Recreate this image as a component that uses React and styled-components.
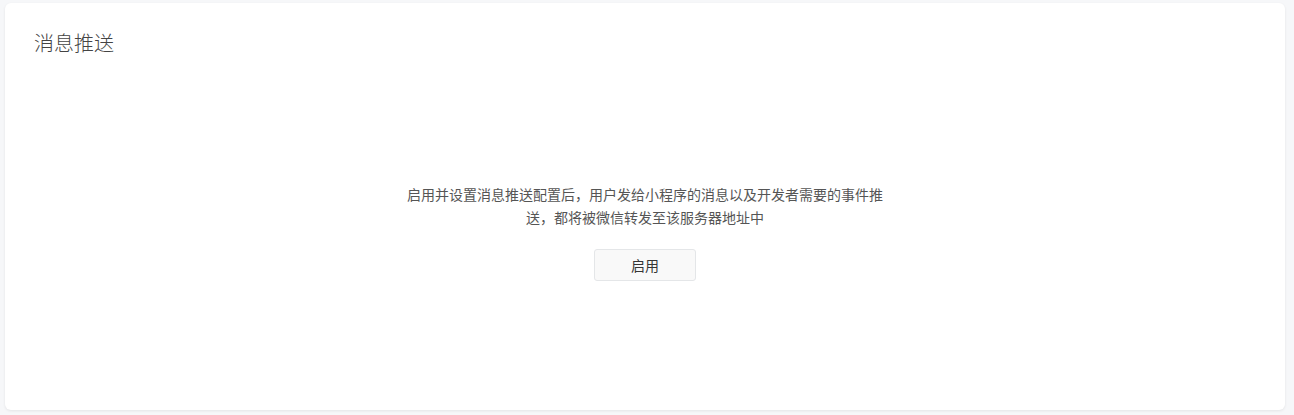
import React from 'react'
import styled, { createGlobalStyle } from 'styled-components'

const GlobalStyle = createGlobalStyle`
  html, body {
    margin: 0;
    padding: 0;
    background: #f6f7f9;
    font-family: "Noto Sans CJK SC", "Noto Sans", sans-serif;
  }
`

const Page = styled.div`
  padding: 3px 9px 5px 5px;
  height: 415px;
  box-sizing: border-box;
  display: flex;
`

const Card = styled.section`
  flex: 1;
  background: #fff;
  border-radius: 6px;
  box-shadow: 0 1px 3px rgba(0, 0, 0, 0.08);
  display: flex;
  flex-direction: column;
  padding: 24px 29px;
`

const Title = styled.h2`
  margin: 0;
  font-size: 20px;
  font-weight: 300;
  line-height: 32px;
  color: #444;
`

const Empty = styled.div`
  display: flex;
  flex-direction: column;
  align-items: center;
  margin-top: 124px;
`

const Desc = styled.p`
  margin: 0;
  width: 484px;
  font-size: 14px;
  line-height: 23px;
  color: #555;
  text-align: center;
`

const Button = styled.button`
  margin-top: 20px;
  width: 102px;
  height: 32px;
  border: 1px solid #e4e6e8;
  border-radius: 3px;
  background: #f9f9f9;
  color: #353535;
  font-family: inherit;
  font-size: 14px;
  cursor: pointer;
`

const App = () => (
  <>
    <GlobalStyle />
    <Page>
      <Card>
        <Title>消息推送</Title>
        <Empty>
          <Desc>启用并设置消息推送配置后，用户发给小程序的消息以及开发者需要的事件推送，都将被微信转发至该服务器地址中</Desc>
          <Button>启用</Button>
        </Empty>
      </Card>
    </Page>
  </>
)

export default App
